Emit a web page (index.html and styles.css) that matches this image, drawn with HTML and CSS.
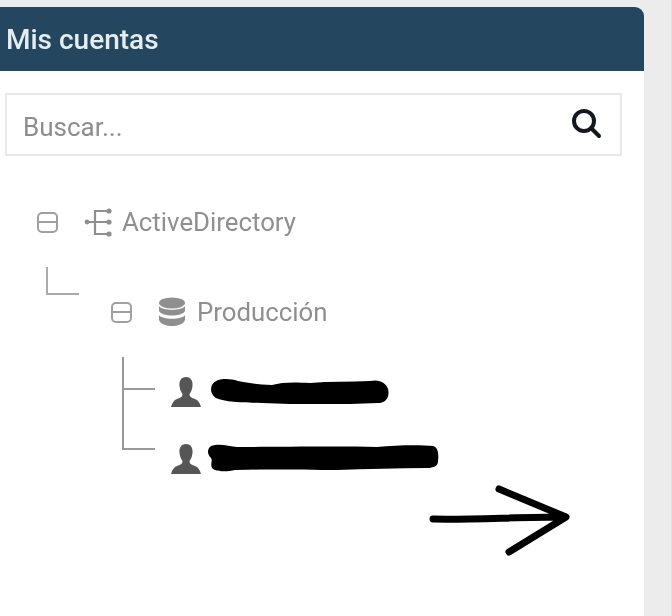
FILE: index.html
```html
<!DOCTYPE html>
<html>

<head>
    <meta charset="UTF-8">
    <title>Mis cuentas</title>
    <link rel="stylesheet" href="styles.css">
</head>

<body>
    <div class="panel">
        <div class="panel-header">Mis cuentas</div>
        <div class="search">
            <span class="search-text">Buscar...</span>
            <svg class="search-icon" width="32" height="32" viewBox="0 0 32 32">
                <circle cx="14" cy="14" r="10" fill="none" stroke="#14181d" stroke-width="4" />
                <path d="M21 21 L29 29" stroke="#14181d" stroke-width="4" stroke-linecap="round" />
            </svg>
        </div>

        <div class="tree">
            <div class="node node-root">
                <span class="toggle"></span>
                <svg class="node-icon" width="30" height="30" viewBox="0 0 30 30">
                    <g fill="none" stroke="#8f8f8f" stroke-width="2.200">
                        <path d="M4 15 H11 M25 4 H11 V27 H25 M11 15 H25" />
                    </g>
                    <g fill="#8f8f8f">
                        <circle cx="3" cy="15" r="2.400" />
                        <circle cx="25" cy="4" r="2.600" />
                        <circle cx="25" cy="15" r="2.600" />
                        <circle cx="25" cy="27" r="2.600" />
                    </g>
                </svg>
                <span class="node-label">ActiveDirectory</span>
            </div>
            <div class="elbow"></div>
            <div class="node node-child">
                <span class="toggle"></span>
                <svg class="node-icon" width="28" height="30" viewBox="0 0 28 30">
                    <g fill="#8f8f8f">
                        <ellipse cx="14" cy="6" rx="13" ry="5.500" />
                        <path d="M1 9 C4 14 24 14 27 9 V14 C24 20 4 20 1 14 Z" />
                        <path d="M1 18 C4 23 24 23 27 18 V23 C24 31 4 31 1 23 Z" />
                    </g>
                </svg>
                <span class="node-label">Producción</span>
            </div>
            <div class="leaf leaf-first">
                <div class="leaf-line"></div>
                <svg class="user-icon" width="30" height="30" viewBox="0 0 30 30">
                    <path fill="#565656" d="M15 0 C20 0 22 4 21.500 9 C21 13 20 15 18.500 17 C18.500 20 21 21 24 22 C27 23 29 26 30 30 H0 C1 26 3 23 6 22 C9 21 11.500 20 11.500 17 C10 15 9 13 8.500 9 C8 4 10 0 15 0 Z" />
                </svg>
                <svg class="blot" width="180" height="28" viewBox="0 0 180 28">
                    <path d="M2 8 C6 1 18 1 28 4 C40 6 50 8 62 8 C72 5 84 5 100 6 C120 4 140 5 160 4 C170 2 176 6 178 12 C180 20 176 26 168 26 C150 27 130 27 110 27 C90 27 70 27 52 26 C36 26 14 25 6 21 C1 18 0 12 2 8 Z" />
                </svg>
            </div>
            <div class="leaf leaf-second">
                <div class="leaf-line"></div>
                <svg class="user-icon" width="30" height="30" viewBox="0 0 30 30">
                    <path fill="#565656" d="M15 0 C20 0 22 4 21.500 9 C21 13 20 15 18.500 17 C18.500 20 21 21 24 22 C27 23 29 26 30 30 H0 C1 26 3 23 6 22 C9 21 11.500 20 11.500 17 C10 15 9 13 8.500 9 C8 4 10 0 15 0 Z" />
                </svg>
                <svg class="blot blot-long" width="232" height="28" viewBox="0 0 232 28">
                    <path d="M4 2 C12 -1 22 2 30 3 C70 3 130 2 170 3 C190 1 215 1 226 2 C231 3 232 10 231 17 C231 22 227 24 220 24 C190 24 160 25 130 26 C100 26 60 25 28 26 C20 28 8 28 5 24 C3 19 6 17 4 14 C0 10 0 5 4 2 Z" />
                </svg>
            </div>
        </div>

        <svg class="arrow" width="144" height="74" viewBox="0 0 144 74">
            <path d="M5 35 C40 36 90 33 136 33 M71 5 L138 33 L81 68" fill="none" stroke="#000" stroke-width="7" stroke-linecap="round" stroke-linejoin="round" />
        </svg>
    </div>
</body>

</html>
```

FILE: styles.css
```css
* {
    box-sizing: border-box;
}

html,
body {
    height: 100%;
}

body {
    margin: 0;
    padding-top: 7px;
    overflow: hidden;
    background-color: #ececec;
    border-right: 1px solid #dfe3e6;
    font-family: Roboto, "Liberation Sans", sans-serif;
}

.panel {
    position: relative;
    width: 644px;
    height: 609px;
    background-color: #fff;
    border-top-right-radius: 9px;
    filter: blur(0.6px);
}

.panel-header {
    height: 64px;
    padding-left: 6px;
    line-height: 66px;
    font-size: 28px;
    font-weight: 500;
    color: #e6edf1;
    background-color: #24475f;
    border-top-right-radius: 9px;
}

.search {
    display: flex;
    justify-content: space-between;
    align-items: center;
    width: 617px;
    height: 63px;
    margin: 22px 0 0 5px;
    padding: 0 18px 0 16px;
    background-color: #fff;
    border: 2px solid #e8e8e8;
}

.search-text {
    margin-top: 5px;
    font-size: 26px;
    color: #8d8d8d;
}

.search-icon {
    margin-top: -3px;
}

.tree {
    padding-top: 51px;
}

.node {
    display: flex;
    align-items: center;
    height: 30px;
}

.node-root {
    padding-left: 37px;
}

.node-child {
    padding-left: 111px;
    margin-top: 2px;
}

.toggle {
    position: relative;
    width: 21px;
    height: 21px;
    border: 2px solid #a0a0a0;
    border-radius: 5px;
}

.toggle::after {
    content: "";
    position: absolute;
    top: 7px;
    left: 0;
    right: 0;
    height: 2px;
    background-color: #a0a0a0;
}

.node-root .node-icon {
    margin: 0 8px 0 26px;
}

.node-child .node-icon {
    margin: 0 11px 0 26px;
}

.node-label {
    font-size: 25.800px;
    color: #8f8f8f;
}

.elbow {
    width: 33px;
    height: 28px;
    margin: 30px 0 0 46px;
    border-left: 2px solid #aaa;
    border-bottom: 2px solid #aaa;
}

.leaf {
    display: flex;
    align-items: flex-start;
    margin-left: 122px;
}

.leaf-first {
    margin-top: 30px;
    height: 33px;
}

.leaf-second {
    height: 60px;
}

.leaf-line {
    width: 33px;
    border-left: 2px solid #999;
    border-bottom: 2px solid #999;
}

.leaf-first .leaf-line {
    height: 33px;
}

.leaf-second .leaf-line {
    height: 60px;
}

.user-icon {
    margin-left: 16px;
}

.leaf-first .user-icon {
    margin-top: 20px;
}

.leaf-second .user-icon {
    margin-top: 54px;
}

.blot {
    flex: none;
    margin-left: 9px;
}

.leaf-first .blot {
    margin-top: 20px;
}

.leaf-second .blot {
    margin-top: 54px;
    margin-left: 6px;
}

.arrow {
    position: absolute;
    left: 428px;
    top: 477px;
}
```
